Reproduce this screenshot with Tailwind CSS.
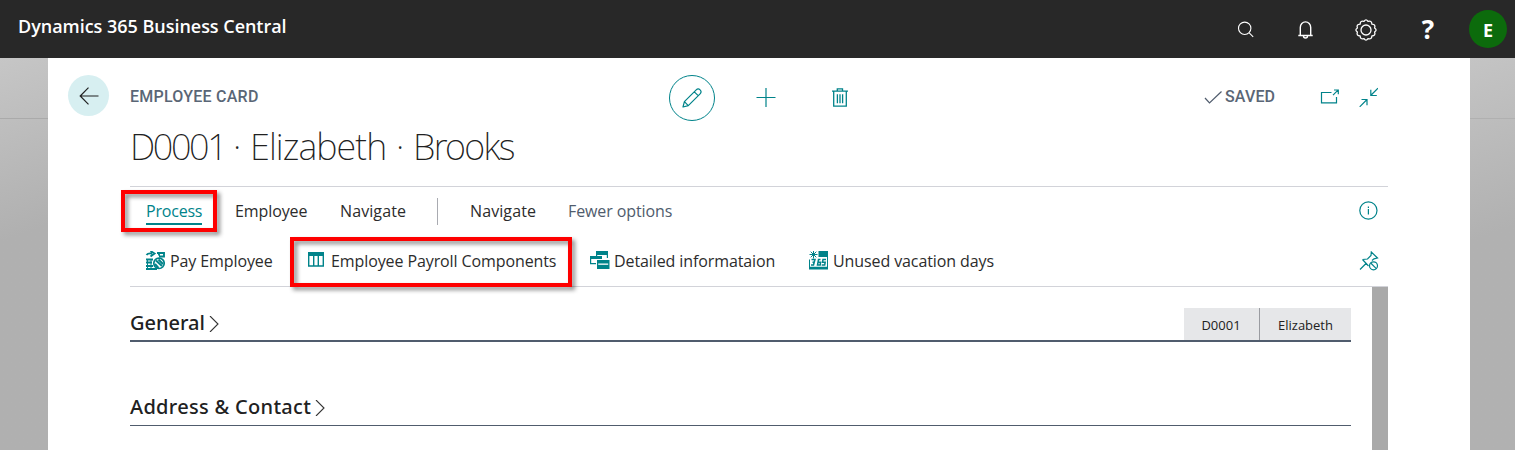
<!DOCTYPE html>
<html lang="en">
<head>
<meta charset="utf-8">
<title>Employee Card</title>
<script src="https://cdn.jsdelivr.net/npm/@tailwindcss/browser@4"></script>
</head>
<body class="h-[450px] w-[1515px] overflow-hidden bg-[#b4b4b4] font-['Open_Sans','Noto_Sans',sans-serif] text-[#212121] whitespace-nowrap">
<header class="flex h-[58px] items-center justify-between bg-[#282828] pl-[18px] pr-2 text-white">
  <h1 class="-mt-1.5 text-[18px] leading-6 font-semibold tracking-[-0.03px]">Dynamics 365 Business Central</h1>
  <div class="flex items-center">
    <svg class="mr-[40px] h-5 w-5" viewBox="0 0 20 20" fill="none" stroke="#fff" stroke-width="1.1"><circle cx="8.7" cy="9.3" r="6.2"/><path d="M13.2 13.9l4 4"/></svg>
    <svg class="mr-[39px] h-5 w-5" viewBox="0 0 20 20" fill="none" stroke="#fff" stroke-width="1.4"><path d="M2.300 16.500h14.400M4.300 16V8.500a5.200 5.600 0 0 1 10.400 0V16M7.500 17a2 2 0 0 0 4 0"/></svg>
    <svg class="mt-px mr-[44px] h-[22px] w-[22px]" viewBox="0 0 22 22" fill="none" stroke="#fff" stroke-width="1.3" stroke-linejoin="round"><path d="M9 2.400Q11 -.6 13 2.400Q16.700 1.100 16.900 5.100Q20.900 5.300 19.600 9Q22.600 11 19.600 13Q20.900 16.700 16.900 16.900Q16.700 20.900 13 19.600Q11 22.600 9 19.600Q5.300 20.900 5.100 16.900Q1.100 16.700 2.400 13Q-.6 11 2.400 9Q1.100 5.300 5.100 5.100Q5.300 1.100 9 2.400Z"/><circle cx="11" cy="11" r="5"/></svg>
    <span class="mr-[34px] w-[14px] text-center text-[26px] leading-8 font-bold">?</span>
    <span class="flex h-[38px] w-[38px] items-center justify-center rounded-full bg-[#0c6b0c] pt-0.5 text-[18px] font-bold">E</span>
  </div>
</header>
<div class="flex h-[392px] justify-between">
  <div class="w-12 bg-linear-160 from-[#c6c6c6] to-[#b0b0b0] to-45%"><div class="h-[61px] border-b border-[#aaaaaa]"></div></div>
  <main class="relative w-[1422px] bg-white pl-5">
    <div class="flex h-[78px] items-center">
      <span class="-mt-[3px] flex h-[41px] w-[41px] items-center justify-center rounded-full bg-[#d7eff1]">
        <svg class="h-5 w-5" viewBox="0 0 20 20" fill="none" stroke="#212121" stroke-width="1.2"><path d="M19.5 10H1.500M9.500 1.700L1.200 10l8.300 8.300"/></svg>
      </span>
      <span class="ml-[21px] w-[539px] font-['Roboto',sans-serif] text-[16px] font-medium text-[#5a6676] tracking-[0.24px]">EMPLOYEE CARD</span>
      <span class="mt-[1px] flex h-[46px] w-[46px] items-center justify-center rounded-full border border-[#00838a]">
        <svg class="h-5 w-5" viewBox="0 0 20 20" fill="none" stroke="#00838a" stroke-width="1.2" stroke-linejoin="round"><path d="M1 19l1.400-5.300L14.200 1.900a2.600 2.600 0 0 1 3.900 3.900L6.300 17.600zM2.400 13.700l3.900 3.900M12.300 3.800l3.900 3.900"/></svg>
      </span>
      <svg class="mt-[2px] ml-[41px] h-5 w-5" viewBox="0 0 20 20" fill="none" stroke="#00838a" stroke-width="1.2"><path d="M10 0v19M.5 9.500h19"/></svg>
      <svg class="mt-[2px] ml-[54px] h-5 w-5" viewBox="0 0 20 20" fill="none" stroke="#00838a" stroke-width="1.3"><path d="M2 3.200h16M3.700 3.200v15h12.600v-15M7.300 2.900V.8h5.200v2M7.400 6.200v9M10 6.200v9M12.600 6.200v9"/></svg>
      <svg class="ml-[353px] h-4 w-5" viewBox="0 0 20 16" fill="none" stroke="#505c6d" stroke-width="1.200"><path d="M2 9l4.500 5L18.500 2.500"/></svg>
      <span class="ml-[2px] w-[94px] font-['Roboto',sans-serif] text-[16px] font-medium text-[#5a6676] tracking-[0.15px]">SAVED</span>
      <svg class="h-5 w-5" viewBox="0 0 20 20" fill="none" stroke="#00838a" stroke-width="1.200"><path d="M12.500 5.500H2.500v10.300h15V10M14 8.200l5-5M15 3h4.300v4.300"/></svg>
      <svg class="ml-[19px] h-5 w-5" viewBox="0 0 20 20" fill="none" stroke="#00838a" stroke-width="1.200"><path d="M20 1.200l-7.300 7.300M12.800 2.700V8.500h6M1.700 19.800L9 12.500M3.500 12.500H9v5.800"/></svg>
    </div>
    <div class="pl-[62px]">
      <h2 class="flex h-[50px] w-[1258px] text-[36px] leading-[22px] font-extralight font-['Noto_Sans','Open_Sans',sans-serif]"><span class="w-[103px] tracking-[-2.400px]">D0001</span><span class="w-[17px]">·</span><span class="w-[146px] tracking-[-0.900px]">Elizabeth</span><span class="w-[17px]">·</span><span class="tracking-[-1.700px]">Brooks</span></h2>
      <nav class="flex h-[51px] w-[1258px] items-center border-t border-[#d2d3d9] pb-[2px] pl-4 text-[16px] tracking-[-0.1px] text-[#2c2c2c]">
        <span class="relative top-px w-[56px] border-b-2 border-[#00838a] text-[#00838a] leading-[23px] tracking-[-0.2px]">Process</span>
        <span class="ml-[33px] w-[105px]">Employee</span>
        <span class="w-[97px] tracking-[0.1px]">Navigate</span>
        <span class="h-[27px] w-[33px] border-l border-[#a9abb1]"></span>
        <span class="w-[98px] tracking-[0.1px]">Navigate</span>
        <span class="w-[790px] text-[#505c6d]">Fewer options</span>
        <svg class="h-5 w-5" viewBox="0 0 20 20" fill="none" stroke="#00838a" stroke-width="1.200"><circle cx="10.400" cy="9.500" r="8.600"/><path d="M10.400 8v5.600M10.400 5.400v1.500"/></svg>
      </nav>
      <div class="flex h-[50px] w-[1258px] items-center border-b border-[#d2d3d9] pb-[2px] pl-[15px] text-[16px] tracking-[-0.1px] text-[#2c2c2c]">
        <svg class="h-5 w-5" viewBox="0 0 20 20" fill="none" stroke="#00838a" stroke-width="1.900"><path d="M1.500 4Q3 1.800 7 2.500M5.500 0l4 2.500L5.500 5.500M12 2h7v3.500h-5M14 2.500v2M1 8.500h7M1 11.500h6M1 15h7M1 18h11"/><circle cx="14" cy="12.300" r="5.200" stroke-width="1.700"/><path d="M11 9.500l6 5.500M13.500 8.500l4.500 4.500M10 13l3.500 4"/><path d="M2.500 8v10M6 8v10" stroke-width="1"/></svg>
        <span class="ml-[5px] w-[136px]">Pay Employee</span>
        <svg class="h-5 w-5" viewBox="0 0 20 20" fill="none"><path d="M2 1h16v4H2z" fill="#00838a"/><path d="M2.700 4v11h14.600V4M7.700 4v11M12.300 4v11" stroke="#00838a" stroke-width="1.400"/></svg>
        <span class="ml-[5px] w-[259px]">Employee Payroll Components</span>
        <svg class="h-5 w-5" viewBox="0 0 20 20" fill="#00838a"><path d="M6 0h12v4H6z"/><path d="M6 0h12v7h-1.200V4H7.200v2H6zM0 5h12v3H1.200v4H6v1.200H0z"/><path d="M7 9h12.500v9H7z"/><path d="M8.200 12.500h10v1.300h-10z" fill="#fff"/></svg>
        <span class="ml-[4px] w-[195px]">Detailed informataion</span>
        <svg class="h-5 w-5" viewBox="0 0 20 20"><path d="M9.500 0H19v6H9.500zM0 8.500h1V16H0zM18 5h1v11h-1zM0 15.800h19V18.500H0z" fill="#00838a"/><path d="M4.500-.5v8M.5 3.500h8M1.700.7l5.600 5.600M7.300.7L1.700 6.300" stroke="#00838a"/><path d="M2.500 8.500H6l-.8 2.700L4.500 14H2M3.500 11.200h2M11.500 8.500h-2L8.500 14h2.700l.3-2.800H9M17 8.500h-3l-.5 2.700h2.700l-.5 2.800h-3" stroke="#00838a" stroke-width="1.500" fill="none"/></svg>
        <span class="ml-[4px] w-[526px]">Unused vacation days</span>
        <svg class="h-5 w-5" viewBox="0 0 20 20" fill="none" stroke="#00838a" stroke-width="1.200"><path d="M1 18.500l6.500-6.500M3.500 8.500l6 6.500M3.500 8.500l5-.5L12 4.500l.3-3.500L18.500 7l-3.500.8L13 9.500"/><circle cx="14.500" cy="14.800" r="4"/><path d="M11.700 12l5.600 5.600"/></svg>
      </div>
      <div class="flex w-[1258px] justify-between">
        <div class="w-[1221px] pt-[21px]">
          <section class="flex h-[34px] justify-between border-b-2 border-[#505c6d]">
            <h3 class="flex items-center pb-[3px] text-[20px] leading-[28px] font-medium font-['Noto_Sans',sans-serif]">General<svg class="mt-[2px] ml-[4px] h-4 w-3" viewBox="0 0 12 16" fill="none" stroke="#333" stroke-width="1.100"><path d="M1 0L9 8 1 16"/></svg></h3>
            <div class="flex h-8 bg-[#e6e7e9] text-[13px] leading-[34px]"><span class="w-[76px] border-r border-[#9a9ca1] pr-px text-center">D0001</span><span class="w-[91px] text-center">Elizabeth</span></div>
          </section>
          <section class="mt-[50px] flex h-[34px] border-b border-[#505c6d]">
            <h3 class="flex items-center pb-[3px] text-[20px] leading-[28px] font-medium tracking-[0.3px] font-['Noto_Sans',sans-serif]">Address &amp; Contact<svg class="mt-[2px] ml-[4px] h-4 w-3" viewBox="0 0 12 16" fill="none" stroke="#333" stroke-width="1.100"><path d="M1 0L9 8 1 16"/></svg></h3>
          </section>
        </div>
        <div class="h-[163px] w-4 bg-[#a9a9a9]"></div>
      </div>
    </div>
    <div class="absolute top-[132px] left-[73px] h-[42px] w-[96px] border-4 border-[#fe0000] drop-shadow-[3px_3px_2px_rgba(0,0,0,0.45)]"></div>
    <div class="absolute top-[179px] left-[242px] h-[50px] w-[282px] border-4 border-[#fe0000] drop-shadow-[3px_3px_2px_rgba(0,0,0,0.45)]"></div>
  </main>
  <div class="w-[45px] bg-linear-160 from-[#c4c4c4] to-[#b1b1b1] to-45%"><div class="h-[61px] border-b border-[#b0b0b0]"></div></div>
</div>
</body>
</html>
